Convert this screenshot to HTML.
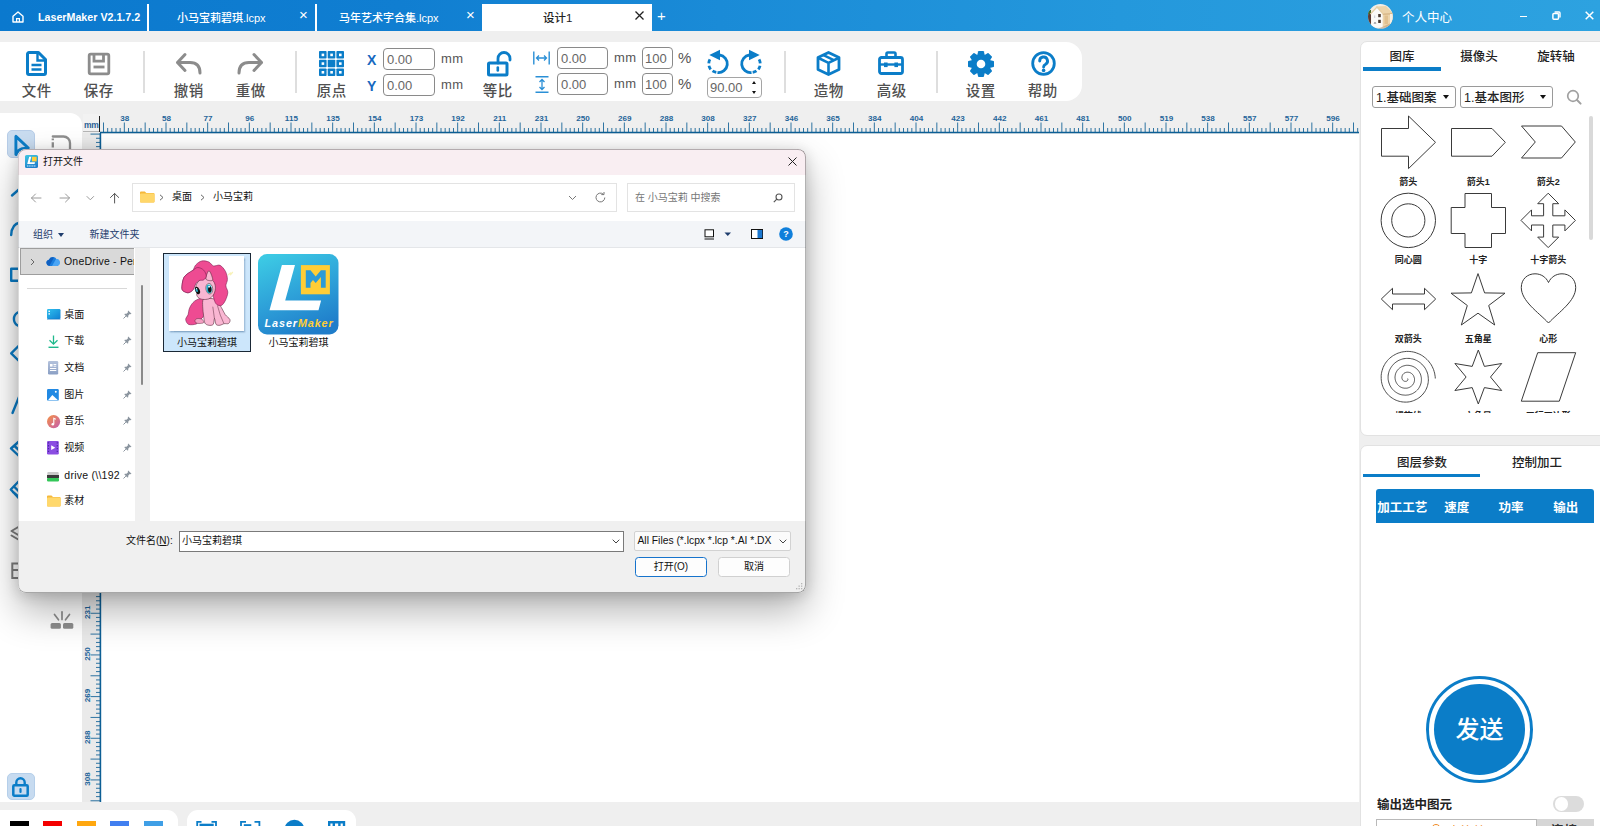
<!DOCTYPE html>
<html lang="zh-CN">
<head>
<meta charset="utf-8">
<title>LaserMaker</title>
<style>
*{box-sizing:border-box;margin:0;padding:0}
html,body{width:1600px;height:826px;overflow:hidden}
body{position:relative;background:#efefef;font-family:"Liberation Sans","Noto Sans CJK SC",sans-serif;color:#333;font-size:12px}
.abs{position:absolute}
svg{display:block;overflow:visible}
/* ---------- title bar ---------- */
#titlebar{position:absolute;left:0;top:0;width:1600px;height:31px;background:linear-gradient(90deg,#0b79ce 0%,#107ed1 25%,#1a8bd7 45%,#2498dc 70%,#2da2e0 100%)}
#titlebar .t{position:absolute;color:#fff;font-size:11px;line-height:14px;white-space:nowrap;font-weight:500}
#titlebar .sep{position:absolute;top:4px;width:2px;height:27px;background:#fff}
#titlebar .x{position:absolute;color:#fff;font-size:15px;line-height:14px}
#acttab{position:absolute;left:482px;top:4px;width:170px;height:27px;background:#fff}
/* ---------- toolbar ---------- */
#toolbar{position:absolute;left:0;top:42px;width:1082px;height:59.400px;background:#fff;border-radius:0 16px 16px 0}
.tb{position:absolute;margin-top:.8px;top:42px;width:60px;padding-left:1.500px;text-align:center;font-size:14.5px;color:#505050;font-weight:500;line-height:16px;letter-spacing:.5px}
.tbsep{position:absolute;top:51px;width:2px;height:42px;background:#dedede}
.inp{position:absolute;height:23px;border:1px solid #8a8a8a;border-radius:4px;background:#fff;font-size:13px;color:#666;line-height:21px;padding-left:3px}
.unit{position:absolute;font-size:13px;color:#555;line-height:14px;letter-spacing:.5px}
/* ---------- panels ---------- */
.panel{position:absolute;background:#fff}

.rt{position:absolute;text-align:center;font-size:12.5px;line-height:16px;color:#222;font-weight:500;white-space:nowrap}
.sel{position:absolute;height:22px;border:1px solid #9a9a9a;border-radius:3px;background:#fff;font-size:12.5px;line-height:22px;color:#222;padding-left:3px;font-weight:500;white-space:nowrap}
.car{position:absolute;width:0;height:0;border-left:3.5px solid transparent;border-right:3.5px solid transparent;border-top:4px solid #111}
.sl{position:absolute;width:70px;text-align:center;font-size:9px;line-height:12px;color:#222;font-weight:700;white-space:nowrap}
.th{position:absolute;width:60px;text-align:center;color:#fff;font-size:12.5px;line-height:16px;font-weight:700;white-space:nowrap}

/*DLGCSS*/
#dlg{position:absolute;left:18px;top:149px;width:788px;height:444px;background:#fff;border-radius:8px;overflow:hidden;box-shadow:0 18px 38px rgba(0,0,0,.30),0 2px 14px rgba(0,0,0,.16);font-family:"Liberation Sans","Noto Sans CJK SC",sans-serif}
#dlgtitle{position:absolute;left:0;top:-1px;width:788px;height:26.300px;background:#f9eef2;border-radius:7px 7px 0 0}
.fl{font-size:10px;line-height:14px;color:#111;text-align:center;white-space:nowrap}
/*ENDDLGCSS*/
</style>
</head>
<body>

<!-- ================= TITLE BAR ================= -->
<div id="titlebar">
  <svg class="abs" style="left:12px;top:11px" width="12" height="12" viewBox="0 0 12 12"><path d="M1 5.2 L6 1 L11 5.2 V11 H1 Z" fill="none" stroke="#fff" stroke-width="1.4" stroke-linejoin="round"/><path d="M4.6 11 V7.6 H7.4 V11" fill="none" stroke="#fff" stroke-width="1.2"/></svg>
  <div class="t" style="left:38px;top:10px;font-weight:700;font-size:10.7px">LaserMaker V2.1.7.2</div>
  <div class="sep" style="left:147px"></div>
  <div class="t" style="left:177px;top:11px">小马宝莉碧琪.lcpx</div>
  <div class="x" style="left:299px;top:8px">×</div>
  <div class="sep" style="left:315px"></div>
  <div class="t" style="left:339px;top:11px">马年艺术字合集.lcpx</div>
  <div class="x" style="left:466px;top:8px">×</div>
  <div id="acttab"></div>
  <div class="t" style="left:543px;top:11px;color:#222;font-weight:500;font-size:11.5px">设计1</div>
  <svg class="abs" style="left:635px;top:11px" width="9" height="9" viewBox="0 0 9 9"><path d="M.5 .5 L8.5 8.5 M8.5 .5 L.5 8.5" stroke="#222" stroke-width="1.3"/></svg>
  <div class="x" style="left:657px;top:9px;font-size:15px">+</div>
  <!-- right side -->
  <svg class="abs" style="left:1367.600px;top:3.900px" width="24.800" height="24.800" viewBox="0 0 24.800 24.800"><defs><clipPath id="avc"><circle cx="12.400" cy="12.400" r="12.400"/></clipPath></defs><g clip-path="url(#avc)"><rect width="24.800" height="24.800" fill="#f3ede4"/><path d="M0 7 H3 V22 H0 Z" fill="#5b3b33"/><path d="M0 6 H3 V10 H0 Z" fill="#3f6b2a"/><path d="M8 2.500 L18 2 L24.800 9 V20 L20 22.500 L14.500 23 V9.500 Z" fill="#ecd4ab"/><path d="M14.500 9.500 L24.800 9 V10.500 L14.500 11 Z" fill="#d9b98a"/><path d="M16.500 11.500 H20 V20 H16.500 Z" fill="#e0c08f"/><path d="M22 10 H24.800 V20 H22 Z" fill="#f6efe4"/><path d="M3.300 23.500 V9.500 L9 3.600 L14.500 9.500 V23.500 Z" fill="#fbfaf8"/><path d="M2.300 10.200 L9 3 L15.200 10" fill="none" stroke="#e6cfa6" stroke-width="1.200"/><rect x="10.200" y="10" width="2.600" height="3.200" fill="#4a3a30"/><rect x="10.200" y="15.800" width="2.600" height="3.200" fill="#4a3a30"/><path d="M5.500 19.500 L7 18 L8.500 19.500 Z" fill="#6a6a70"/><path d="M6.700 11.500 V14" stroke="#b8c0cc" stroke-width=".800"/><path d="M14 23 L22 19.500 V24.800 H10 Z" fill="#b9946a" opacity=".55"/></g></svg>
  <div class="t" style="left:1402px;top:10.500px;font-size:12.500px;font-weight:400">个人中心</div>
  <div class="abs" style="left:1519.500px;top:15.500px;width:7px;height:1.500px;background:#fff"></div>
  <svg class="abs" style="left:1552px;top:11px" width="9" height="9" viewBox="0 0 9 9"><rect x=".9" y="2.6" width="5.6" height="5.6" rx="1" fill="none" stroke="#fff" stroke-width="1.5"/><path d="M2.6 1 H7 A1 1 0 0 1 8 2 V6.4" fill="none" stroke="#fff" stroke-width="1.4"/></svg>
  <svg class="abs" style="left:1585px;top:11px" width="9" height="9" viewBox="0 0 9 9"><path d="M.7 .7 L8.3 8.3 M8.3 .7 L.7 8.3" stroke="#fff" stroke-width="1.5"/></svg>
</div>

<!-- ================= TOOLBAR ================= -->
<div id="toolbar"></div>
<!--TB-START-->
<!-- 文件 -->
<svg class="abs" style="left:26px;top:51px" width="21" height="25" viewBox="0 0 21 25"><path d="M3 1.5 H12.5 L19.5 8.5 V22 A1.5 1.5 0 0 1 18 23.5 H3 A1.5 1.5 0 0 1 1.5 22 V3 A1.5 1.5 0 0 1 3 1.5 Z" fill="none" stroke="#0b7dc8" stroke-width="3" stroke-linejoin="round"/><path d="M11.5 2 V9.5 H19" fill="none" stroke="#0b7dc8" stroke-width="2.4"/><path d="M5.5 14 H15.5 M5.5 18.5 H15.5" stroke="#0b7dc8" stroke-width="2.4"/></svg>
<div class="tb" style="left:6px;top:82px">文件</div>
<!-- 保存 -->
<svg class="abs" style="left:88px;top:52.700px" width="22" height="22" viewBox="0 0 22 22"><rect x="1.2" y="1.2" width="19.6" height="19.6" rx="1.5" fill="none" stroke="#8c8c8c" stroke-width="2.8"/><path d="M6 1.5 V8.2 H15.5 V1.5" fill="none" stroke="#8c8c8c" stroke-width="2.8"/><path d="M5.5 14 H16.5" stroke="#8c8c8c" stroke-width="2.8"/></svg>
<div class="tb" style="left:68px;top:82px">保存</div>
<div class="tbsep" style="left:143px"></div>
<!-- 撤销 -->
<svg class="abs" style="left:175px;top:53px" width="27" height="21" viewBox="0 0 27 21"><path d="M10 1.5 L2.5 9.5 L10 17.5" fill="none" stroke="#8c8c8c" stroke-width="3" stroke-linecap="round" stroke-linejoin="round"/><path d="M3 9.5 H15 Q25 9.5 25 20" fill="none" stroke="#8c8c8c" stroke-width="3" stroke-linecap="round"/></svg>
<div class="tb" style="left:158px;top:82px">撤销</div>
<!-- 重做 -->
<svg class="abs" style="left:237px;top:53px" width="27" height="21" viewBox="0 0 27 21"><path d="M17 1.5 L24.500 9.5 L17 17.5" fill="none" stroke="#8c8c8c" stroke-width="3" stroke-linecap="round" stroke-linejoin="round"/><path d="M24 9.500 H12 Q2 9.5 2 20" fill="none" stroke="#8c8c8c" stroke-width="3" stroke-linecap="round"/></svg>
<div class="tb" style="left:220px;top:82px">重做</div>
<div class="tbsep" style="left:295px"></div>
<!-- 原点 -->
<svg class="abs" style="left:319px;top:51px" width="25" height="25" viewBox="0 0 25 25">
<g fill="#0b7dc8"><rect x="0" y="0" width="7.6" height="7.6" rx=".8"/><rect x="8.7" y="0" width="7.6" height="7.6" rx=".8"/><rect x="17.4" y="0" width="7.6" height="7.6" rx=".8"/><rect x="0" y="8.7" width="7.6" height="7.6" rx=".8"/><rect x="8.7" y="8.700" width="7.6" height="7.6" rx=".8"/><rect x="17.4" y="8.7" width="7.6" height="7.6" rx=".8"/><rect x="0" y="17.4" width="7.6" height="7.6" rx=".8"/><rect x="8.7" y="17.4" width="7.6" height="7.6" rx=".8"/><rect x="17.4" y="17.4" width="7.6" height="7.6" rx=".8"/></g>
<g fill="#fff"><rect x="2.6" y="2.6" width="2.6" height="2.6"/><rect x="11.3" y="2.6" width="2.6" height="2.6"/><rect x="20" y="2.6" width="2.6" height="2.6"/><rect x="2.6" y="11.3" width="2.6" height="2.6"/><rect x="20" y="11.3" width="2.6" height="2.6"/><rect x="2.6" y="20" width="2.6" height="2.6"/><rect x="11.3" y="20" width="2.6" height="2.6"/><rect x="20" y="20" width="2.6" height="2.6"/></g></svg>
<div class="tb" style="left:301px;top:82px">原点</div>
<!-- X / Y -->
<div class="abs" style="left:367px;top:52px;font-weight:700;font-size:14px;line-height:16px;color:#1668c0">X</div>
<div class="abs" style="left:367px;top:78px;font-weight:700;font-size:14px;line-height:16px;color:#1668c0">Y</div>
<div class="inp" style="left:383px;top:48px;width:52px;height:22px">0.00</div>
<div class="inp" style="left:383px;top:74px;width:52px;height:22px">0.00</div>
<div class="unit" style="left:441px;top:52px">mm</div>
<div class="unit" style="left:441px;top:78px">mm</div>
<!-- 等比 -->
<svg class="abs" style="left:487px;top:51px" width="25" height="26" viewBox="0 0 25 26"><rect x="1.5" y="12" width="18.5" height="12" rx="1" fill="none" stroke="#0b7dc8" stroke-width="3"/><path d="M11 12 V7.5 A6 6 0 0 1 23 7.500 V9" fill="none" stroke="#0b7dc8" stroke-width="2.8" stroke-linecap="round"/><path d="M10.8 16.5 V19.5" stroke="#0b7dc8" stroke-width="2.6" stroke-linecap="round"/></svg>
<div class="tb" style="left:467px;top:82px">等比</div>
<!-- W / H -->
<svg class="abs" style="left:533px;top:51px" width="17" height="14" viewBox="0 0 17 14"><path d="M.8 .5 V13.500 M16.2 .5 V13.500" stroke="#2a8fd6" stroke-width="1.4"/><path d="M3.500 7 H13.500 M6 4.500 L3.500 7 L6 9.500 M11 4.500 L13.500 7 L11 9.500" fill="none" stroke="#2a8fd6" stroke-width="1.3"/></svg>
<svg class="abs" style="left:535px;top:76px" width="14" height="17" viewBox="0 0 14 17"><path d="M.5 .8 H13.500 M.5 16.2 H13.500" stroke="#2a8fd6" stroke-width="1.4"/><path d="M7 3.500 V13.500 M4.500 6 L7 3.500 L9.500 6 M4.500 11 L7 13.500 L9.500 11" fill="none" stroke="#2a8fd6" stroke-width="1.3"/></svg>
<div class="inp" style="left:557px;top:47px;width:51px;height:22px">0.00</div>
<div class="inp" style="left:557px;top:73px;width:51px;height:22px">0.00</div>
<div class="unit" style="left:614px;top:51px">mm</div>
<div class="unit" style="left:614px;top:77px">mm</div>
<div class="inp" style="left:642px;top:47px;width:31px;height:22px;padding-left:2px">100</div>
<div class="inp" style="left:642px;top:73px;width:31px;height:22px;padding-left:2px">100</div>
<div class="unit" style="left:678px;top:50px;font-size:15px;line-height:16px">%</div>
<div class="unit" style="left:678px;top:76px;font-size:15px;line-height:16px">%</div>
<!-- rotate -->
<svg class="abs" style="left:707px;top:49px" width="23" height="25" viewBox="0 0 23 25"><path d="M12.500 6 A8.750 8.750 0 0 1 10.500 23.500" fill="none" stroke="#0b7dc8" stroke-width="2.800"/><path d="M10.500 23.500 A8.750 8.750 0 0 1 3.300 9.800" fill="none" stroke="#0b7dc8" stroke-width="2.800" stroke-dasharray="4 2.400" stroke-dashoffset="-1.200"/><path d="M2.300 6 L13 .8 V11.200 Z" fill="#0b7dc8"/></svg>
<svg class="abs" style="left:739px;top:49px" width="23" height="25" viewBox="0 0 23 25"><g transform="translate(23,0) scale(-1,1)"><path d="M12.500 6 A8.750 8.750 0 0 1 10.500 23.500" fill="none" stroke="#0b7dc8" stroke-width="2.800"/><path d="M10.500 23.500 A8.750 8.750 0 0 1 3.300 9.800" fill="none" stroke="#0b7dc8" stroke-width="2.800" stroke-dasharray="4 2.400" stroke-dashoffset="-1.200"/><path d="M2.300 6 L13 .8 V11.200 Z" fill="#0b7dc8"/></g></svg>
<div class="inp" style="left:707px;top:76.500px;width:55px;height:21px;line-height:19px;padding-left:2px;border-color:#a5a5a5">90.00</div>
<div class="abs" style="left:751.500px;top:80.500px;width:0;height:0;border-left:2.600px solid transparent;border-right:2.600px solid transparent;border-bottom:3.200px solid #111"></div>
<div class="abs" style="left:751.500px;top:90.500px;width:0;height:0;border-left:2.600px solid transparent;border-right:2.600px solid transparent;border-top:3.200px solid #111"></div>
<div class="tbsep" style="left:784px"></div>
<!-- 造物 -->
<svg class="abs" style="left:816px;top:51px" width="25" height="25" viewBox="0 0 25 25"><path d="M12.500 1.500 L23 6.500 V18.500 L12.500 23.500 L2 18.500 V6.500 Z" fill="none" stroke="#0b7dc8" stroke-width="2.8" stroke-linejoin="round"/><path d="M2.500 7 L12.500 11.800 L22.500 7 M12.500 11.800 V23" fill="none" stroke="#0b7dc8" stroke-width="2.6"/><path d="M7.500 4.200 L17.800 9.200" stroke="#0b7dc8" stroke-width="2.4"/></svg>
<div class="tb" style="left:798px;top:82px">造物</div>
<!-- 高级 -->
<svg class="abs" style="left:878px;top:51px" width="26" height="24" viewBox="0 0 26 24"><rect x="1.5" y="6.500" width="23" height="16" rx="2" fill="none" stroke="#0b7dc8" stroke-width="2.8"/><path d="M8.500 6 V2.800 A1.300 1.300 0 0 1 9.800 1.500 H16.200 A1.300 1.300 0 0 1 17.500 2.800 V6" fill="none" stroke="#0b7dc8" stroke-width="2.600"/><path d="M2 13.500 H24" stroke="#0b7dc8" stroke-width="2.4"/><rect x="6" y="11.500" width="3.600" height="4.600" fill="#0b7dc8"/><rect x="16.400" y="11.500" width="3.600" height="4.600" fill="#0b7dc8"/></svg>
<div class="tb" style="left:861px;top:82px">高级</div>
<div class="tbsep" style="left:936px"></div>
<!-- 设置 -->
<svg class="abs" style="left:968px;top:50.500px" width="26" height="26" viewBox="-13 -13 26 26"><g fill="#0b7dc8"><circle r="9.800"/><g transform="rotate(0)"><path d="M-3.900 -8.500 L-2.900 -12.600 Q-2.800 -13 -2.300 -13 H2.300 Q2.800 -13 2.900 -12.600 L3.900 -8.500 Z"/></g><g transform="rotate(45)"><path d="M-3.900 -8.500 L-2.900 -12.600 Q-2.800 -13 -2.300 -13 H2.300 Q2.800 -13 2.900 -12.600 L3.900 -8.500 Z"/></g><g transform="rotate(90)"><path d="M-3.900 -8.500 L-2.900 -12.600 Q-2.800 -13 -2.300 -13 H2.300 Q2.800 -13 2.900 -12.600 L3.900 -8.500 Z"/></g><g transform="rotate(135)"><path d="M-3.900 -8.500 L-2.900 -12.600 Q-2.800 -13 -2.300 -13 H2.300 Q2.800 -13 2.900 -12.600 L3.900 -8.500 Z"/></g><g transform="rotate(180)"><path d="M-3.900 -8.500 L-2.900 -12.600 Q-2.800 -13 -2.300 -13 H2.300 Q2.800 -13 2.900 -12.600 L3.900 -8.500 Z"/></g><g transform="rotate(225)"><path d="M-3.900 -8.500 L-2.900 -12.600 Q-2.800 -13 -2.300 -13 H2.300 Q2.800 -13 2.900 -12.600 L3.900 -8.500 Z"/></g><g transform="rotate(270)"><path d="M-3.900 -8.500 L-2.900 -12.600 Q-2.800 -13 -2.300 -13 H2.300 Q2.800 -13 2.900 -12.600 L3.900 -8.500 Z"/></g><g transform="rotate(315)"><path d="M-3.900 -8.500 L-2.900 -12.600 Q-2.800 -13 -2.300 -13 H2.300 Q2.800 -13 2.900 -12.600 L3.900 -8.500 Z"/></g></g><circle r="4.300" fill="#fff"/></svg>
<div class="tb" style="left:950px;top:82px">设置</div>
<!-- 帮助 -->
<svg class="abs" style="left:1031px;top:51.300px" width="25" height="25" viewBox="0 0 25 25"><circle cx="12.500" cy="12.500" r="10.800" fill="none" stroke="#0b7dc8" stroke-width="2.800"/><path d="M8.700 10 A3.900 3.900 0 1 1 14.600 13.200 Q12.600 14.300 12.600 16" fill="none" stroke="#0b7dc8" stroke-width="2.900" stroke-linecap="round"/><circle cx="12.600" cy="19.400" r="1.800" fill="#0b7dc8"/></svg>
<div class="tb" style="left:1012px;top:82px">帮助</div>
<!--TB-END-->

<!-- ================= LEFT TOOL PANEL ================= -->
<div class="panel" style="left:0;top:113px;width:81.500px;height:689px;border-radius:0 12px 0 0"></div>
<!--LT-START-->
<div class="abs" style="left:7px;top:130px;width:28px;height:27.500px;border-radius:5px;background:#c9dcf0;border:1px solid #b7cde8"></div>
<svg class="abs" style="left:0;top:113px" width="82" height="689" viewBox="0 113 82 689" fill="none" stroke="#0b7dc8" stroke-width="2.400" stroke-linecap="round" stroke-linejoin="round">
<path d="M15.900 136.400 V154.600 Q18 149.800 22.200 148.700 L28.300 148 Z" stroke-width="2.900"/>
<path d="M52.800 136.500 H63.500 A6.500 6.500 0 0 1 70 143 V156" stroke="#8e8e8e" stroke-width="2.300"/>
<path d="M52.800 138.500 V140.200 M52.800 142.300 V147.500 M52.800 149.500 V156" stroke="#8e8e8e" stroke-width="2.300" stroke-linecap="butt"/>
<path d="M12 195.500 L20 188.500"/>
<path d="M11.200 235 C11.500 228 14 223.500 20 222.500"/>
<path d="M20 268.700 H11.200 V280.700 H20"/>
<path d="M20 312.500 A7.500 7.500 0 0 0 20 325.500" transform="translate(-2.300 0)"/>
<path d="M20 344.500 L11.200 353.300 L20 362"/>
<path d="M12.500 413 L19 397"/>
<path d="M20 440.500 L11 448.500 L20 457 M14.500 446 L20 451"/>
<path d="M20 480 L10.800 489.500 L20 499.500 M14.500 487 L20 492.500 M13 492 L20 498"/>
<path d="M20 526 L11.500 531 L20 536 M11.500 535.500 L20 540.500" stroke="#7d7d7d" stroke-width="2"/>
<path d="M20 563.500 H12.300 V578 H20 M12.300 570 H20" stroke="#7d7d7d" stroke-width="2" stroke-linejoin="miter"/>
<g stroke="none" fill="#8e8e8e"><rect x="50.600" y="623" width="10.300" height="5.800" rx="1.500"/><rect x="63" y="623" width="10.300" height="5.800" rx="1.500"/></g>
<path d="M62 611.800 V619.500 M54.500 614.500 L58.500 619.800 M69.500 614.500 L65.500 619.800" stroke="#8e8e8e" stroke-width="1.700"/>
</svg>
<div class="abs" style="left:7px;top:772.500px;width:27.500px;height:27px;border-radius:5px;background:#c7dbf0;border:1px solid #b5cfea"></div>
<svg class="abs" style="left:12px;top:777px" width="17" height="20" viewBox="0 0 17 20" fill="none" stroke="#0b7dc8"><rect x="1.300" y="8.300" width="14.400" height="10.400" rx="1" stroke-width="2.500"/><path d="M4.300 8 V5.500 A4.200 4.200 0 0 1 12.700 5.500 V8" stroke-width="2.400"/><path d="M8.500 12 V15" stroke-width="2.200" stroke-linecap="round"/></svg>
<!--LT-END-->

<!-- ================= CANVAS + RULERS ================= -->
<div class="panel" style="left:82px;top:113px;width:1277px;height:689px"></div>
<!--RU-START-->
<div class="abs" style="left:82px;top:113px;width:1277px;height:21px;background:#efefef"></div>
<div class="abs" style="left:82px;top:133px;width:19px;height:669px;background:#eaeaea"></div>
<svg class="abs" style="left:82px;top:113px" width="1277" height="21" viewBox="0 0 1277 21" font-family="Liberation Sans, sans-serif">
<path d="M21.50 9.5V19M25.67 15V19M29.83 15V19M34.00 15V19M38.17 15V19M42.33 9.5V19M46.50 15V19M50.67 15V19M54.83 15V19M59.00 15V19M63.17 9.5V19M67.33 15V19M71.50 15V19M75.67 15V19M79.83 15V19M84.00 9.5V19M88.17 15V19M92.33 15V19M96.50 15V19M100.67 15V19M104.83 9.5V19M109.00 15V19M113.17 15V19M117.33 15V19M121.50 15V19M125.67 9.5V19M129.83 15V19M134.00 15V19M138.17 15V19M142.33 15V19M146.50 9.5V19M150.67 15V19M154.83 15V19M159.00 15V19M163.17 15V19M167.33 9.5V19M171.50 15V19M175.67 15V19M179.83 15V19M184.00 15V19M188.17 9.5V19M192.33 15V19M196.50 15V19M200.67 15V19M204.83 15V19M209.00 9.5V19M213.17 15V19M217.33 15V19M221.50 15V19M225.67 15V19M229.83 9.5V19M234.00 15V19M238.17 15V19M242.33 15V19M246.50 15V19M250.67 9.5V19M254.83 15V19M259.00 15V19M263.17 15V19M267.33 15V19M271.50 9.5V19M275.67 15V19M279.83 15V19M284.00 15V19M288.17 15V19M292.33 9.5V19M296.50 15V19M300.67 15V19M304.83 15V19M309.00 15V19M313.17 9.5V19M317.33 15V19M321.50 15V19M325.67 15V19M329.83 15V19M334.00 9.5V19M338.17 15V19M342.33 15V19M346.50 15V19M350.67 15V19M354.83 9.5V19M359.00 15V19M363.17 15V19M367.33 15V19M371.50 15V19M375.67 9.5V19M379.83 15V19M384.00 15V19M388.17 15V19M392.33 15V19M396.50 9.5V19M400.67 15V19M404.83 15V19M409.00 15V19M413.17 15V19M417.33 9.5V19M421.50 15V19M425.67 15V19M429.83 15V19M434.00 15V19M438.17 9.5V19M442.33 15V19M446.50 15V19M450.67 15V19M454.83 15V19M459.00 9.5V19M463.17 15V19M467.33 15V19M471.50 15V19M475.67 15V19M479.83 9.5V19M484.00 15V19M488.17 15V19M492.33 15V19M496.50 15V19M500.67 9.5V19M504.83 15V19M509.00 15V19M513.17 15V19M517.33 15V19M521.50 9.5V19M525.67 15V19M529.83 15V19M534.00 15V19M538.17 15V19M542.33 9.5V19M546.50 15V19M550.67 15V19M554.83 15V19M559.00 15V19M563.17 9.5V19M567.33 15V19M571.50 15V19M575.67 15V19M579.83 15V19M584.00 9.5V19M588.17 15V19M592.33 15V19M596.50 15V19M600.67 15V19M604.83 9.5V19M609.00 15V19M613.17 15V19M617.33 15V19M621.50 15V19M625.67 9.5V19M629.83 15V19M634.00 15V19M638.17 15V19M642.33 15V19M646.50 9.5V19M650.67 15V19M654.83 15V19M659.00 15V19M663.17 15V19M667.33 9.5V19M671.50 15V19M675.67 15V19M679.83 15V19M684.00 15V19M688.17 9.5V19M692.33 15V19M696.50 15V19M700.67 15V19M704.83 15V19M709.00 9.5V19M713.17 15V19M717.33 15V19M721.50 15V19M725.67 15V19M729.83 9.5V19M734.00 15V19M738.17 15V19M742.33 15V19M746.50 15V19M750.67 9.5V19M754.83 15V19M759.00 15V19M763.17 15V19M767.33 15V19M771.50 9.5V19M775.67 15V19M779.83 15V19M784.00 15V19M788.17 15V19M792.33 9.5V19M796.50 15V19M800.67 15V19M804.83 15V19M809.00 15V19M813.17 9.5V19M817.33 15V19M821.50 15V19M825.67 15V19M829.83 15V19M834.00 9.5V19M838.17 15V19M842.33 15V19M846.50 15V19M850.67 15V19M854.83 9.5V19M859.00 15V19M863.17 15V19M867.33 15V19M871.50 15V19M875.67 9.5V19M879.83 15V19M884.00 15V19M888.17 15V19M892.33 15V19M896.50 9.5V19M900.67 15V19M904.83 15V19M909.00 15V19M913.17 15V19M917.33 9.5V19M921.50 15V19M925.67 15V19M929.83 15V19M934.00 15V19M938.17 9.5V19M942.33 15V19M946.50 15V19M950.67 15V19M954.83 15V19M959.00 9.5V19M963.17 15V19M967.33 15V19M971.50 15V19M975.67 15V19M979.83 9.5V19M984.00 15V19M988.17 15V19M992.33 15V19M996.50 15V19M1000.67 9.5V19M1004.83 15V19M1009.00 15V19M1013.17 15V19M1017.33 15V19M1021.50 9.5V19M1025.67 15V19M1029.83 15V19M1034.00 15V19M1038.17 15V19M1042.33 9.5V19M1046.50 15V19M1050.67 15V19M1054.83 15V19M1059.00 15V19M1063.16 9.5V19M1067.33 15V19M1071.50 15V19M1075.66 15V19M1079.83 15V19M1084.00 9.5V19M1088.16 15V19M1092.33 15V19M1096.50 15V19M1100.66 15V19M1104.83 9.5V19M1109.00 15V19M1113.16 15V19M1117.33 15V19M1121.50 15V19M1125.66 9.5V19M1129.83 15V19M1134.00 15V19M1138.16 15V19M1142.33 15V19M1146.50 9.5V19M1150.66 15V19M1154.83 15V19M1159.00 15V19M1163.16 15V19M1167.33 9.5V19M1171.50 15V19M1175.66 15V19M1179.83 15V19M1184.00 15V19M1188.16 9.5V19M1192.33 15V19M1196.50 15V19M1200.66 15V19M1204.83 15V19M1209.00 9.5V19M1213.16 15V19M1217.33 15V19M1221.50 15V19M1225.66 15V19M1229.83 9.5V19M1234.00 15V19M1238.16 15V19M1242.33 15V19M1246.50 15V19M1250.66 9.5V19M1254.83 15V19M1259.00 15V19M1263.16 15V19M1267.33 15V19M1271.50 9.5V19M1275.66 15V19" stroke="#0d5f95" stroke-width="1" fill="none" opacity=".85"/>
<path d="M18 19.5H1277" stroke="#0d5f95" stroke-width="1.6"/>
<text x="42.7" y="8.300" font-size="8.1" font-weight="700" fill="#1f659a" text-anchor="middle">38</text>
<text x="84.4" y="8.300" font-size="8.1" font-weight="700" fill="#1f659a" text-anchor="middle">58</text>
<text x="126.1" y="8.300" font-size="8.1" font-weight="700" fill="#1f659a" text-anchor="middle">77</text>
<text x="167.7" y="8.300" font-size="8.1" font-weight="700" fill="#1f659a" text-anchor="middle">96</text>
<text x="209.4" y="8.300" font-size="8.1" font-weight="700" fill="#1f659a" text-anchor="middle">115</text>
<text x="251.1" y="8.300" font-size="8.1" font-weight="700" fill="#1f659a" text-anchor="middle">135</text>
<text x="292.7" y="8.300" font-size="8.1" font-weight="700" fill="#1f659a" text-anchor="middle">154</text>
<text x="334.4" y="8.300" font-size="8.1" font-weight="700" fill="#1f659a" text-anchor="middle">173</text>
<text x="376.1" y="8.300" font-size="8.1" font-weight="700" fill="#1f659a" text-anchor="middle">192</text>
<text x="417.7" y="8.300" font-size="8.1" font-weight="700" fill="#1f659a" text-anchor="middle">211</text>
<text x="459.4" y="8.300" font-size="8.1" font-weight="700" fill="#1f659a" text-anchor="middle">231</text>
<text x="501.1" y="8.300" font-size="8.1" font-weight="700" fill="#1f659a" text-anchor="middle">250</text>
<text x="542.7" y="8.300" font-size="8.1" font-weight="700" fill="#1f659a" text-anchor="middle">269</text>
<text x="584.4" y="8.300" font-size="8.1" font-weight="700" fill="#1f659a" text-anchor="middle">288</text>
<text x="626.1" y="8.300" font-size="8.1" font-weight="700" fill="#1f659a" text-anchor="middle">308</text>
<text x="667.7" y="8.300" font-size="8.1" font-weight="700" fill="#1f659a" text-anchor="middle">327</text>
<text x="709.4" y="8.300" font-size="8.1" font-weight="700" fill="#1f659a" text-anchor="middle">346</text>
<text x="751.1" y="8.300" font-size="8.1" font-weight="700" fill="#1f659a" text-anchor="middle">365</text>
<text x="792.7" y="8.300" font-size="8.1" font-weight="700" fill="#1f659a" text-anchor="middle">384</text>
<text x="834.4" y="8.300" font-size="8.1" font-weight="700" fill="#1f659a" text-anchor="middle">404</text>
<text x="876.1" y="8.300" font-size="8.1" font-weight="700" fill="#1f659a" text-anchor="middle">423</text>
<text x="917.7" y="8.300" font-size="8.1" font-weight="700" fill="#1f659a" text-anchor="middle">442</text>
<text x="959.4" y="8.300" font-size="8.1" font-weight="700" fill="#1f659a" text-anchor="middle">461</text>
<text x="1001.1" y="8.300" font-size="8.1" font-weight="700" fill="#1f659a" text-anchor="middle">481</text>
<text x="1042.7" y="8.300" font-size="8.1" font-weight="700" fill="#1f659a" text-anchor="middle">500</text>
<text x="1084.4" y="8.300" font-size="8.1" font-weight="700" fill="#1f659a" text-anchor="middle">519</text>
<text x="1126.1" y="8.300" font-size="8.1" font-weight="700" fill="#1f659a" text-anchor="middle">538</text>
<text x="1167.7" y="8.300" font-size="8.1" font-weight="700" fill="#1f659a" text-anchor="middle">557</text>
<text x="1209.4" y="8.300" font-size="8.1" font-weight="700" fill="#1f659a" text-anchor="middle">577</text>
<text x="1251.1" y="8.300" font-size="8.1" font-weight="700" fill="#1f659a" text-anchor="middle">596</text>
</svg>
<div class="abs" style="left:83px;top:114px;width:17px;height:18px;background:#f2f2f2;border-bottom:1px solid #b5b5b5"></div>
<div class="abs" style="left:99px;top:116px;width:1px;height:16px;background:#222"></div>
<div class="abs" style="left:84px;top:120px;font-size:8.5px;line-height:10px;font-weight:700;color:#2a5f95;letter-spacing:-.2px">mm</div>
<svg class="abs" style="left:82px;top:133px" width="19" height="669" viewBox="0 0 19 669" font-family="Liberation Sans, sans-serif">
<path d="M8.5 1.10H18M14 5.27H18M14 9.43H18M14 13.60H18M14 17.77H18M8.5 21.93H18M14 26.10H18M14 30.27H18M14 34.43H18M14 38.60H18M8.5 42.77H18M14 46.93H18M14 51.10H18M14 55.27H18M14 59.43H18M8.5 63.60H18M14 67.77H18M14 71.93H18M14 76.10H18M14 80.27H18M8.5 84.43H18M14 88.60H18M14 92.77H18M14 96.93H18M14 101.10H18M8.5 105.27H18M14 109.43H18M14 113.60H18M14 117.77H18M14 121.93H18M8.5 126.10H18M14 130.27H18M14 134.43H18M14 138.60H18M14 142.77H18M8.5 146.93H18M14 151.10H18M14 155.27H18M14 159.43H18M14 163.60H18M8.5 167.77H18M14 171.93H18M14 176.10H18M14 180.27H18M14 184.43H18M8.5 188.60H18M14 192.77H18M14 196.93H18M14 201.10H18M14 205.27H18M8.5 209.43H18M14 213.60H18M14 217.77H18M14 221.93H18M14 226.10H18M8.5 230.27H18M14 234.43H18M14 238.60H18M14 242.77H18M14 246.93H18M8.5 251.10H18M14 255.27H18M14 259.43H18M14 263.60H18M14 267.77H18M8.5 271.93H18M14 276.10H18M14 280.27H18M14 284.43H18M14 288.60H18M8.5 292.77H18M14 296.93H18M14 301.10H18M14 305.27H18M14 309.43H18M8.5 313.60H18M14 317.77H18M14 321.93H18M14 326.10H18M14 330.27H18M8.5 334.43H18M14 338.60H18M14 342.77H18M14 346.93H18M14 351.10H18M8.5 355.27H18M14 359.43H18M14 363.60H18M14 367.77H18M14 371.93H18M8.5 376.10H18M14 380.27H18M14 384.43H18M14 388.60H18M14 392.77H18M8.5 396.93H18M14 401.10H18M14 405.27H18M14 409.43H18M14 413.60H18M8.5 417.77H18M14 421.93H18M14 426.10H18M14 430.27H18M14 434.43H18M8.5 438.60H18M14 442.77H18M14 446.93H18M14 451.10H18M14 455.27H18M8.5 459.43H18M14 463.60H18M14 467.77H18M14 471.93H18M14 476.10H18M8.5 480.27H18M14 484.43H18M14 488.60H18M14 492.77H18M14 496.93H18M8.5 501.10H18M14 505.27H18M14 509.43H18M14 513.60H18M14 517.77H18M8.5 521.93H18M14 526.10H18M14 530.27H18M14 534.43H18M14 538.60H18M8.5 542.77H18M14 546.93H18M14 551.10H18M14 555.27H18M14 559.43H18M8.5 563.60H18M14 567.77H18M14 571.93H18M14 576.10H18M14 580.27H18M8.5 584.43H18M14 588.60H18M14 592.77H18M14 596.93H18M14 601.10H18M8.5 605.27H18M14 609.43H18M14 613.60H18M14 617.77H18M14 621.93H18M8.5 626.10H18M14 630.27H18M14 634.43H18M14 638.60H18M14 642.77H18M8.5 646.93H18M14 651.10H18M14 655.27H18M14 659.43H18M14 663.60H18M8.5 667.77H18" stroke="#0d5f95" stroke-width="1" fill="none" opacity=".85"/>
<path d="M18.4 0V669" stroke="#0d5f95" stroke-width="1.6"/>
<text transform="translate(8.2 62.6) rotate(-90)" font-size="8.1" font-weight="700" fill="#1f659a" text-anchor="middle">38</text>
<text transform="translate(8.2 104.3) rotate(-90)" font-size="8.1" font-weight="700" fill="#1f659a" text-anchor="middle">58</text>
<text transform="translate(8.2 145.9) rotate(-90)" font-size="8.1" font-weight="700" fill="#1f659a" text-anchor="middle">77</text>
<text transform="translate(8.2 187.6) rotate(-90)" font-size="8.1" font-weight="700" fill="#1f659a" text-anchor="middle">96</text>
<text transform="translate(8.2 229.3) rotate(-90)" font-size="8.1" font-weight="700" fill="#1f659a" text-anchor="middle">115</text>
<text transform="translate(8.2 270.9) rotate(-90)" font-size="8.1" font-weight="700" fill="#1f659a" text-anchor="middle">135</text>
<text transform="translate(8.2 312.6) rotate(-90)" font-size="8.1" font-weight="700" fill="#1f659a" text-anchor="middle">154</text>
<text transform="translate(8.2 354.3) rotate(-90)" font-size="8.1" font-weight="700" fill="#1f659a" text-anchor="middle">173</text>
<text transform="translate(8.2 395.9) rotate(-90)" font-size="8.1" font-weight="700" fill="#1f659a" text-anchor="middle">192</text>
<text transform="translate(8.2 437.6) rotate(-90)" font-size="8.1" font-weight="700" fill="#1f659a" text-anchor="middle">211</text>
<text transform="translate(8.2 479.3) rotate(-90)" font-size="8.1" font-weight="700" fill="#1f659a" text-anchor="middle">231</text>
<text transform="translate(8.2 520.9) rotate(-90)" font-size="8.1" font-weight="700" fill="#1f659a" text-anchor="middle">250</text>
<text transform="translate(8.2 562.6) rotate(-90)" font-size="8.1" font-weight="700" fill="#1f659a" text-anchor="middle">269</text>
<text transform="translate(8.2 604.3) rotate(-90)" font-size="8.1" font-weight="700" fill="#1f659a" text-anchor="middle">288</text>
<text transform="translate(8.2 645.9) rotate(-90)" font-size="8.1" font-weight="700" fill="#1f659a" text-anchor="middle">308</text>
</svg>
<!--RU-END-->

<!-- ================= BOTTOM BARS ================= -->
<div class="panel" style="left:0;top:810px;width:177.500px;height:20px;border-radius:0 11px 0 0"></div>
<div class="panel" style="left:187px;top:810px;width:169px;height:20px;border-radius:11px 11px 0 0"></div>
<!--BO-START-->
<div class="abs" style="left:10px;top:821px;width:19px;height:8px;background:#000"></div>
<div class="abs" style="left:43px;top:821px;width:19px;height:8px;background:#f40000"></div>
<div class="abs" style="left:76.500px;top:821px;width:19px;height:8px;background:#ffa70f"></div>
<div class="abs" style="left:110px;top:821px;width:19px;height:8px;background:#417ff0"></div>
<div class="abs" style="left:143.500px;top:821px;width:19px;height:8px;background:#3f9fe6"></div>
<svg class="abs" style="left:187px;top:810px" width="169" height="16" viewBox="187 810 169 16" fill="none" stroke="#0b7dc8" stroke-width="1.800">
<path d="M197.200 827 V821.900 H201.500 M211.500 821.900 H216 V827"/>
<rect x="199.500" y="823.700" width="14.200" height="5" fill="#0b7dc8" stroke="none"/>
<path d="M241 827 V821.900 H246 M254.500 821.900 H259.400 V827"/>
<rect x="243.800" y="824.200" width="7.500" height="4" fill="#0b7dc8" stroke="none"/>
<circle cx="294.400" cy="829.800" r="10" fill="#0b7dc8" stroke="none"/>
<path d="M329.200 828 V822.200 H344 V828 M333.800 822 V828 M339.400 822 V828" stroke-width="2.400"/>
</svg>
<!--BO-END-->

<!-- ================= RIGHT PANELS ================= -->
<div class="panel" style="left:1360px;top:41px;width:241px;height:394.500px;border-radius:7px 0 0 7px;border:1px solid #e2e2e2"></div>
<div class="panel" style="left:1360px;top:445px;width:241px;height:390px;border-radius:7px 0 0 0;border:1px solid #e2e2e2"></div>
<!--RI-START-->
<div class="rt" style="left:1372px;top:48.500px;width:60px">图库</div>
<div class="rt" style="left:1449px;top:48.500px;width:60px">摄像头</div>
<div class="rt" style="left:1526px;top:48.500px;width:60px">旋转轴</div>
<div class="abs" style="left:1363px;top:67px;width:78px;height:3.5px;background:#0b7dc8"></div>
<div class="sel" style="left:1372px;top:86px;width:84px">1.基础图案</div><div class="car" style="left:1443px;top:95px"></div>
<div class="sel" style="left:1460px;top:86px;width:93px">1.基本图形</div><div class="car" style="left:1540px;top:95px"></div>
<svg class="abs" style="left:1566px;top:89px" width="16" height="16" viewBox="0 0 16 16"><circle cx="7" cy="7" r="5.300" fill="none" stroke="#a0a0a0" stroke-width="1.700"/><path d="M11 11 L14.600 14.600" stroke="#a0a0a0" stroke-width="2" stroke-linecap="round"/></svg>
<div class="abs" style="left:1589px;top:116px;width:4px;height:124px;background:#d9d9d9;border-radius:2px"></div>
<div class="abs" style="left:1372px;top:110px;width:215px;height:303px;overflow:hidden">
<svg class="abs" style="left:0;top:0" width="215" height="320" viewBox="1372 110 215 320" fill="none" stroke="#3a3a3a" stroke-width="1" stroke-linejoin="miter">
<path d="M1381.500 128.500 H1408.500 V116 L1435.500 142.300 L1408.500 168.600 V156.200 H1381.500 Z"/>
<path d="M1451.500 128.500 H1492 L1505.300 142.300 L1492 156.200 H1451.500 Z"/>
<path d="M1521.500 126 H1561.500 L1575.300 142 L1561.500 158 H1521.500 L1535.300 142 Z"/>
<circle cx="1408.300" cy="220.400" r="27.200"/><circle cx="1408.300" cy="220.400" r="16.600"/>
<path d="M1465 193.500 H1491.500 V207.500 H1505.500 V233.500 H1491.500 V247.500 H1465 V233.500 H1451.200 V207.500 H1465 Z"/>
<path d="M1552.8 215.8 L1564.9 215.8 L1564.9 209.9 L1575.4 220.4 L1564.9 230.9 L1564.9 225.0 L1552.8 225.0 L1552.8 225.0 L1552.8 237.1 L1558.7 237.1 L1548.2 247.6 L1537.7 237.1 L1543.6 237.1 L1543.6 225.0 L1543.6 225.0 L1531.5 225.0 L1531.5 230.9 L1521.0 220.4 L1531.5 209.9 L1531.5 215.8 L1543.6 215.8 L1543.6 215.8 L1543.6 203.7 L1537.7 203.7 L1548.2 193.2 L1558.7 203.7 L1552.8 203.7 L1552.8 215.8 Z"/>
<path d="M1381.300 299 L1392.500 288.300 V294 H1424.500 V288.300 L1435.700 299 L1424.500 309.700 V304 H1392.500 V309.700 Z"/>
<path d="M1478.0 273.6 L1484.6 292.9 L1505.0 293.2 L1488.7 305.5 L1494.7 325.0 L1478.0 313.2 L1461.3 325.0 L1467.3 305.5 L1451.0 293.2 L1471.4 292.9 Z"/>
<path d="M1548.500 323 C1538 312 1521.300 301 1521.300 287.500 C1521.300 279 1527.500 273.800 1535 273.800 C1541 273.800 1546 277 1548.500 282.500 C1551 277 1556 273.800 1562 273.800 C1569.500 273.800 1575.700 279 1575.700 287.500 C1575.700 301 1559 312 1548.500 323 Z"/>
<path stroke-width=".9" d="M1407.5 378.5 L1407.6 378.6 L1407.6 378.6 L1407.7 378.7 L1407.7 378.8 L1407.8 378.9 L1407.8 379.0 L1407.8 379.1 L1407.9 379.2 L1407.9 379.4 L1407.9 379.5 L1407.9 379.6 L1407.8 379.8 L1407.8 379.9 L1407.8 380.0 L1407.7 380.2 L1407.6 380.3 L1407.6 380.4 L1407.5 380.5 L1407.4 380.7 L1407.2 380.8 L1407.1 380.9 L1407.0 381.0 L1406.8 381.1 L1406.7 381.2 L1406.5 381.2 L1406.3 381.3 L1406.1 381.4 L1405.9 381.4 L1405.8 381.4 L1405.5 381.4 L1405.3 381.4 L1405.1 381.4 L1404.9 381.4 L1404.7 381.3 L1404.5 381.3 L1404.3 381.2 L1404.1 381.1 L1403.8 381.0 L1403.6 380.9 L1403.4 380.7 L1403.2 380.6 L1403.1 380.4 L1402.9 380.2 L1402.7 380.0 L1402.6 379.8 L1402.4 379.5 L1402.3 379.3 L1402.2 379.0 L1402.1 378.8 L1402.0 378.5 L1402.0 378.2 L1401.9 377.9 L1401.9 377.6 L1401.9 377.3 L1401.9 377.0 L1402.0 376.7 L1402.0 376.4 L1402.1 376.1 L1402.2 375.8 L1402.3 375.5 L1402.5 375.2 L1402.6 374.9 L1402.8 374.6 L1403.0 374.3 L1403.3 374.0 L1403.5 373.8 L1403.8 373.5 L1404.1 373.3 L1404.4 373.1 L1404.7 372.9 L1405.0 372.8 L1405.4 372.6 L1405.7 372.5 L1406.1 372.4 L1406.5 372.3 L1406.9 372.2 L1407.3 372.2 L1407.7 372.2 L1408.1 372.2 L1408.5 372.3 L1408.9 372.3 L1409.4 372.4 L1409.8 372.6 L1410.2 372.7 L1410.6 372.9 L1410.9 373.1 L1411.3 373.4 L1411.7 373.6 L1412.0 373.9 L1412.4 374.2 L1412.7 374.6 L1413.0 374.9 L1413.3 375.3 L1413.5 375.7 L1413.7 376.2 L1413.9 376.6 L1414.1 377.0 L1414.2 377.5 L1414.4 378.0 L1414.5 378.5 L1414.5 379.0 L1414.5 379.5 L1414.5 380.0 L1414.5 380.5 L1414.4 381.1 L1414.3 381.6 L1414.1 382.1 L1414.0 382.6 L1413.7 383.1 L1413.5 383.6 L1413.2 384.1 L1412.9 384.5 L1412.6 385.0 L1412.2 385.4 L1411.8 385.8 L1411.4 386.2 L1410.9 386.5 L1410.4 386.8 L1409.9 387.1 L1409.4 387.4 L1408.8 387.6 L1408.3 387.8 L1407.7 388.0 L1407.1 388.1 L1406.5 388.2 L1405.9 388.2 L1405.3 388.2 L1404.6 388.2 L1404.0 388.2 L1403.4 388.0 L1402.8 387.9 L1402.2 387.7 L1401.6 387.5 L1401.0 387.2 L1400.4 386.9 L1399.8 386.6 L1399.3 386.2 L1398.8 385.8 L1398.3 385.3 L1397.8 384.8 L1397.4 384.3 L1397.0 383.7 L1396.6 383.2 L1396.3 382.6 L1396.0 381.9 L1395.7 381.3 L1395.5 380.6 L1395.3 379.9 L1395.2 379.2 L1395.1 378.5 L1395.0 377.8 L1395.0 377.1 L1395.1 376.3 L1395.2 375.6 L1395.3 374.9 L1395.5 374.1 L1395.7 373.4 L1396.0 372.7 L1396.3 372.0 L1396.7 371.4 L1397.1 370.7 L1397.6 370.1 L1398.1 369.5 L1398.6 368.9 L1399.2 368.4 L1399.8 367.9 L1400.4 367.5 L1401.1 367.0 L1401.8 366.6 L1402.5 366.3 L1403.3 366.0 L1404.1 365.8 L1404.9 365.6 L1405.7 365.4 L1406.5 365.3 L1407.3 365.3 L1408.2 365.3 L1409.0 365.4 L1409.8 365.5 L1410.7 365.7 L1411.5 365.9 L1412.3 366.2 L1413.1 366.5 L1413.9 366.9 L1414.6 367.3 L1415.4 367.8 L1416.1 368.3 L1416.8 368.9 L1417.4 369.5 L1418.0 370.2 L1418.6 370.9 L1419.1 371.6 L1419.5 372.4 L1420.0 373.2 L1420.3 374.0 L1420.7 374.9 L1420.9 375.7 L1421.1 376.6 L1421.3 377.6 L1421.4 378.5 L1421.4 379.4 L1421.4 380.4 L1421.3 381.3 L1421.2 382.3 L1421.0 383.2 L1420.7 384.1 L1420.4 385.1 L1420.0 385.9 L1419.6 386.8 L1419.1 387.7 L1418.6 388.5 L1418.0 389.3 L1417.3 390.0 L1416.6 390.7 L1415.9 391.4 L1415.1 392.0 L1414.2 392.6 L1413.4 393.1 L1412.5 393.6 L1411.5 394.0 L1410.6 394.3 L1409.6 394.6 L1408.6 394.9 L1407.5 395.0 L1406.5 395.1 L1405.5 395.2 L1404.4 395.1 L1403.3 395.0 L1402.3 394.9 L1401.3 394.7 L1400.2 394.4 L1399.2 394.0 L1398.2 393.6 L1397.3 393.1 L1396.3 392.5 L1395.4 391.9 L1394.5 391.2 L1393.7 390.5 L1392.9 389.7 L1392.2 388.9 L1391.5 388.0 L1390.9 387.1 L1390.3 386.1 L1389.8 385.1 L1389.4 384.1 L1389.0 383.0 L1388.7 381.9 L1388.4 380.8 L1388.2 379.6 L1388.1 378.5 L1388.1 377.3 L1388.1 376.2 L1388.2 375.0 L1388.4 373.9 L1388.7 372.7 L1389.0 371.6 L1389.4 370.5 L1389.9 369.4 L1390.5 368.3 L1391.1 367.3 L1391.8 366.3 L1392.5 365.4 L1393.3 364.4 L1394.2 363.6 L1395.1 362.8 L1396.1 362.0 L1397.1 361.4 L1398.1 360.7 L1399.2 360.2 L1400.4 359.7 L1401.6 359.3 L1402.8 358.9 L1404.0 358.7 L1405.2 358.5 L1406.5 358.4 L1407.8 358.4 L1409.0 358.4 L1410.3 358.5 L1411.6 358.8 L1412.8 359.0 L1414.1 359.4 L1415.3 359.9 L1416.5 360.4 L1417.6 361.0 L1418.7 361.7 L1419.8 362.4 L1420.8 363.2 L1421.8 364.1 L1422.7 365.1 L1423.6 366.1 L1424.4 367.1 L1425.2 368.2 L1425.8 369.4 L1426.4 370.6 L1427.0 371.9 L1427.4 373.1 L1427.8 374.4 L1428.0 375.8 L1428.2 377.1 L1428.3 378.5 L1428.4 379.9 L1428.3 381.3 L1428.2 382.6 L1427.9 384.0 L1427.6 385.4 L1427.2 386.7 L1426.7 388.0 L1426.1 389.3 L1425.5 390.5 L1424.7 391.8 L1423.9 392.9 L1423.0 394.0 L1422.1 395.1 L1421.0 396.1 L1420.0 397.0 L1418.8 397.9 L1417.6 398.7 L1416.3 399.4 L1415.0 400.0 L1413.7 400.6 L1412.3 401.1 L1410.9 401.5 L1409.4 401.8 L1408.0 402.0 L1406.5 402.1 L1405.0 402.1 L1403.5 402.0 L1402.0 401.9 L1400.6 401.6 L1399.1 401.3 L1397.7 400.8 L1396.2 400.3 L1394.9 399.7 L1393.5 398.9 L1392.2 398.1 L1391.0 397.3 L1389.8 396.3 L1388.6 395.3 L1387.6 394.2 L1386.6 393.0 L1385.6 391.7 L1384.8 390.4 L1384.0 389.1 L1383.3 387.7 L1382.7 386.2 L1382.2 384.7 L1381.8 383.2 L1381.5 381.7 L1381.3 380.1 L1381.2 378.5 L1381.2 376.9 L1381.2 375.3 L1381.4 373.7 L1381.7 372.1 L1382.1 370.6 L1382.6 369.0 L1383.1 367.5 L1383.8 366.0 L1384.6 364.6 L1385.4 363.2 L1386.4 361.9 L1387.4 360.6 L1388.5 359.4 L1389.7 358.2 L1391.0 357.2 L1392.3 356.2 L1393.7 355.3 L1395.2 354.5 L1396.7 353.7 L1398.2 353.1 L1399.8 352.6 L1401.5 352.1 L1403.1 351.8 L1404.8 351.6 L1406.5 351.4 L1408.2 351.4 L1409.9 351.5 L1411.6 351.7 L1413.3 352.0 L1415.0 352.4 L1416.6 353.0 L1418.2 353.6 L1419.8 354.3 L1421.3 355.1 L1422.8 356.0 L1424.2 357.1 L1425.6 358.2 L1426.9 359.4 L1428.1 360.6 L1429.2 362.0 L1430.3 363.4 L1431.3 364.9 L1432.1 366.4 L1432.9 368.1 L1433.6 369.7 L1434.1 371.4 L1434.6 373.1 L1434.9 374.9 L1435.2 376.7 L1435.3 378.5"/>
<path d="M1478.3 350.0 L1484.4 366.4 L1501.7 363.5 L1490.5 377.0 L1501.7 390.5 L1484.4 387.6 L1478.3 404.0 L1472.2 387.6 L1454.9 390.5 L1466.1 377.0 L1454.9 363.5 L1472.2 366.4 Z"/>
<path d="M1537.700 352.700 H1575.700 L1559.300 401.200 H1521.300 Z"/>
</svg>
<div class="sl" style="left:1.3px;top:66.0px">箭头</div>
<div class="sl" style="left:71.3px;top:66.0px">箭头1</div>
<div class="sl" style="left:141.3px;top:66.0px">箭头2</div>
<div class="sl" style="left:1.3px;top:144.0px">同心圆</div>
<div class="sl" style="left:71.3px;top:144.0px">十字</div>
<div class="sl" style="left:141.3px;top:144.0px">十字箭头</div>
<div class="sl" style="left:1.3px;top:222.5px">双箭头</div>
<div class="sl" style="left:71.3px;top:222.5px">五角星</div>
<div class="sl" style="left:141.3px;top:222.5px">心形</div>
<div class="sl" style="left:1.3px;top:300.0px">螺旋线</div>
<div class="sl" style="left:71.3px;top:300.0px">六角星</div>
<div class="sl" style="left:141.3px;top:300.0px">平行四边形</div>
</div>
<div class="rt" style="left:1382px;top:454.500px;width:80px">图层参数</div>
<div class="rt" style="left:1497px;top:454.500px;width:80px">控制加工</div>
<div class="abs" style="left:1363px;top:473.500px;width:117px;height:3.5px;background:#0b7dc8"></div>
<div class="abs" style="left:1376px;top:489px;width:217.500px;height:34px;background:#0b7dc8;border-radius:3px 3px 0 0"></div>
<div class="th" style="left:1372.3px;top:500px">加工工艺</div>
<div class="th" style="left:1426.7px;top:500px">速度</div>
<div class="th" style="left:1481.0px;top:500px">功率</div>
<div class="th" style="left:1535.7px;top:500px">输出</div>
<div class="abs" style="left:1426px;top:676px;width:107px;height:107px;border-radius:50%;border:3.5px solid #0b7dc8;background:#fff"></div>
<div class="abs" style="left:1434px;top:684px;width:91px;height:91px;border-radius:50%;background:#0b7dc8;color:#fff;font-size:24px;line-height:92px;text-align:center;font-weight:500">发送</div>
<div class="abs" style="left:1377px;top:798px;font-size:12.5px;line-height:15px;font-weight:700;color:#222">输出选中图元</div>
<div class="abs" style="left:1553px;top:795.500px;width:31px;height:16.500px;border-radius:9px;background:#dcdcdc"></div>
<div class="abs" style="left:1554.500px;top:797px;width:13.500px;height:13.500px;border-radius:50%;background:#fff"></div>
<div class="abs" style="left:1376px;top:818.500px;width:161px;height:12px;background:#fff;border:1px solid #b9b9b9"></div>
<div class="abs" style="left:1536.500px;top:818.500px;width:57px;height:12px;background:#d6d6d6"></div>
<div class="abs" style="left:1431px;top:823.5px;width:10px;height:10px;border-radius:50%;border:1.5px solid #f08a24"></div>
<div class="abs" style="left:1448px;top:825.5px;font-size:12px;line-height:12px;color:#f08a24;letter-spacing:1px">未连接</div>
<div class="abs" style="left:1551px;top:825px;font-size:12.5px;line-height:12px;color:#333;font-weight:700;letter-spacing:1px">连接</div>
<!--RI-END-->

<!-- ================= DIALOG ================= -->
<!--DL-START-->
<div id="dlg">
<div class="abs" style="left:0;top:.6px;width:788px;height:443.400px">
  <div id="dlgtitle"></div>
  <!-- app icon -->
  <svg class="abs" style="left:7px;top:5.500px" width="13" height="13" viewBox="0 0 13 13"><defs><linearGradient id="lmg0" x1="0" y1="0" x2=".4" y2="1"><stop offset="0" stop-color="#3ec6e2"/><stop offset="1" stop-color="#1f80cc"/></linearGradient></defs><rect width="13" height="13" rx="1.600" fill="url(#lmg0)"/><path d="M4.200 1.800 H6.300 L4.800 7.300 H10 L9.600 9 H2.200 Z" fill="#fff"/><rect x="7" y="1.800" width="4.600" height="4.600" fill="#ffcd38"/><path d="M2 11 H11" stroke="#cfeaf8" stroke-width="1" stroke-dasharray="1.200 .500"/></svg>
  <div class="abs" style="left:25px;top:5.600px;font-size:10px;line-height:14px;color:#111">打开文件</div>
  <svg class="abs" style="left:769.500px;top:7.500px" width="9" height="9" viewBox="0 0 9 9"><path d="M.5 .5 L8.500 8.500 M8.500 .5 L.5 8.500" stroke="#222" stroke-width="1"/></svg>
  <!-- nav row -->
  <svg class="abs" style="left:12px;top:42px" width="100" height="12" viewBox="0 0 100 12" fill="none" stroke-linecap="round" stroke-linejoin="round">
    <path d="M11 6 H1.500 M5.500 2 L1.500 6 L5.500 10" stroke="#9a9a9a" stroke-width="1"/>
    <path d="M30 6 H39.500 M35.500 2 L39.500 6 L35.500 10" stroke="#9a9a9a" stroke-width="1"/>
    <path d="M57 4.500 L60.300 7.800 L63.600 4.500" stroke="#9a9a9a" stroke-width="1"/>
    <path d="M84.600 11 V1.500 M80.500 5.500 L84.600 1.500 L88.700 5.500" stroke="#555" stroke-width="1"/>
  </svg>
  <div class="abs" style="left:114px;top:33.500px;width:485px;height:29px;background:#fff;border:1px solid #e3e3e3"></div>
  <svg class="abs" style="left:121.500px;top:41px" width="14.500" height="11.500" viewBox="0 0 14.500 11.500"><path d="M0 1.500 A1 1 0 0 1 1 .5 H4.800 L6.300 2 H13.500 A1 1 0 0 1 14.500 3 V10.500 A1 1 0 0 1 13.500 11.500 H1 A1 1 0 0 1 0 10.500 Z" fill="#f5b83a"/><path d="M0 3.500 A1 1 0 0 1 1 2.600 H13.500 A1 1 0 0 1 14.500 3.500 V10.500 A1 1 0 0 1 13.500 11.500 H1 A1 1 0 0 1 0 10.500 Z" fill="#ffd76a"/></svg>
  <svg class="abs" style="left:141px;top:44.500px" width="5" height="7" viewBox="0 0 5 7"><path d="M1 .8 L4 3.500 L1 6.200" fill="none" stroke="#555" stroke-width=".900"/></svg>
  <div class="abs" style="left:154px;top:40.500px;font-size:10px;line-height:14px;color:#111">桌面</div>
  <svg class="abs" style="left:182px;top:44.500px" width="5" height="7" viewBox="0 0 5 7"><path d="M1 .8 L4 3.500 L1 6.200" fill="none" stroke="#555" stroke-width=".900"/></svg>
  <div class="abs" style="left:195px;top:40.500px;font-size:10px;line-height:14px;color:#111">小马宝莉</div>
  <svg class="abs" style="left:549.500px;top:45.500px" width="9" height="6" viewBox="0 0 9 6"><path d="M1 1 L4.500 4.500 L8 1" fill="none" stroke="#777" stroke-width="1"/></svg>
  <svg class="abs" style="left:577px;top:42.500px" width="11" height="11" viewBox="0 0 11 11"><path d="M9.800 5.500 A4.400 4.400 0 1 1 8.300 2.200" fill="none" stroke="#777" stroke-width="1"/><path d="M6.300 2.600 H9 V0" fill="none" stroke="#777" stroke-width="1"/></svg>
  <div class="abs" style="left:609px;top:33.500px;width:168px;height:29px;background:#fff;border:1px solid #e3e3e3"></div>
  <div class="abs" style="left:617px;top:41px;font-size:10px;line-height:14px;color:#767676">在 小马宝莉 中搜索</div>
  <svg class="abs" style="left:755px;top:43px" width="10" height="10" viewBox="0 0 10 10"><circle cx="6" cy="4" r="3" fill="none" stroke="#555" stroke-width="1.100"/><path d="M3.800 6.200 L.8 9.200" stroke="#555" stroke-width="1.200"/></svg>
  <!-- command row -->
  <div class="abs" style="left:0;top:71.500px;width:788px;height:26.500px;background:#f3f5f8;border-bottom:1px solid #e4e6e9"></div>
  <div class="abs" style="left:15px;top:78.300px;font-size:10px;line-height:14px;color:#1f3d6d">组织</div>
  <div class="abs" style="left:40px;top:83px;width:0;height:0;border-left:3.300px solid transparent;border-right:3.300px solid transparent;border-top:4px solid #1f3d6d"></div>
  <div class="abs" style="left:71.500px;top:78.300px;font-size:10px;line-height:14px;color:#1f3d6d">新建文件夹</div>
  <svg class="abs" style="left:686px;top:79px" width="30" height="11" viewBox="0 0 30 11"><rect x="1" y=".8" width="8.500" height="7" fill="#fff" stroke="#111" stroke-width="1"/><path d="M.5 10 H10" stroke="#111" stroke-width="1"/><path d="M20.500 3.500 H27 L23.750 7 Z" fill="#1f3d6d"/></svg>
  <svg class="abs" style="left:732.500px;top:79px" width="12" height="10" viewBox="0 0 12 10"><rect x=".5" y=".5" width="11" height="9" fill="#fff" stroke="#111" stroke-width="1"/><rect x="6.500" y="1" width="4.800" height="8" fill="#1b78d0"/></svg>
  <svg class="abs" style="left:760.500px;top:77px" width="14" height="14" viewBox="0 0 14 14"><circle cx="7" cy="7" r="6.800" fill="#0f7fdb"/><text x="7" y="10.300" font-family="Liberation Sans, sans-serif" font-size="9" font-weight="700" fill="#fff" text-anchor="middle">?</text></svg>
  <!-- nav pane -->
  <div class="abs" style="left:1px;top:98.500px;width:116.300px;height:273px;background:#fff"></div>
  <div class="abs" style="left:117.300px;top:98.500px;width:15px;height:273px;background:#f0f0f0"></div>
  <div class="abs" style="left:122.500px;top:135px;width:2px;height:100px;background:#8a8a8a;border-radius:1px"></div>
  <div class="abs" style="left:132px;top:98.500px;width:656px;height:273px;background:#fff"></div>
  <div class="abs" style="left:2px;top:98.500px;width:114px;height:27px;background:#d9d9d9;border:1px solid #9d9d9d;border-right:none"></div>
  <svg class="abs" style="left:11.500px;top:108px" width="5" height="8" viewBox="0 0 5 8"><path d="M1 1 L4 4 L1 7" fill="none" stroke="#666" stroke-width="1"/></svg>
  <svg class="abs" style="left:28px;top:107px" width="14" height="9" viewBox="0 0 14 9"><path d="M3.300 9 A3.200 3.200 0 0 1 2.900 2.700 A4.200 4.200 0 0 1 10.600 2.300 A3.400 3.400 0 0 1 10.800 9 Z" fill="#1b7fe0"/><path d="M2.900 2.700 A4.200 4.200 0 0 1 8 .6 L3.300 9 A3.200 3.200 0 0 1 2.900 2.700Z" fill="#0f5fc0"/><path d="M6 9 L10 2 A3.400 3.400 0 0 1 10.800 9 Z" fill="#4aa5f5"/></svg>
  <div class="abs" style="left:46px;top:104.500px;width:70px;overflow:hidden;white-space:nowrap;font-size:10.500px;line-height:14px;color:#111;letter-spacing:.2px">OneDrive - Personal</div>
  <div class="abs" style="left:9px;top:138px;width:100px;height:1px;background:#d8d8d8"></div>
  <div class="abs" style="left:46.3px;top:158.0px;font-size:10px;line-height:14px;color:#111;white-space:nowrap">桌面</div>
<svg class="abs" style="left:105.0px;top:160.1px" width="9" height="9" viewBox="0 0 9 9"><path d="M5.200 .5 L8.500 3.800 L7.600 4.200 L6.800 4 L5.300 5.500 L5.200 7.200 L4.400 7.600 L1.400 4.600 L1.800 3.800 L3.500 3.700 L5 2.200 L4.800 1.400 Z" fill="#8b959f"/><path d="M2.900 6.100 L.5 8.500" stroke="#8b959f" stroke-width="1"/></svg>
<div class="abs" style="left:46.3px;top:184.6px;font-size:10px;line-height:14px;color:#111;white-space:nowrap">下载</div>
<svg class="abs" style="left:105.0px;top:186.7px" width="9" height="9" viewBox="0 0 9 9"><path d="M5.200 .5 L8.500 3.800 L7.600 4.200 L6.800 4 L5.300 5.500 L5.200 7.200 L4.400 7.600 L1.400 4.600 L1.800 3.800 L3.500 3.700 L5 2.200 L4.800 1.400 Z" fill="#8b959f"/><path d="M2.900 6.100 L.5 8.500" stroke="#8b959f" stroke-width="1"/></svg>
<div class="abs" style="left:46.3px;top:211.3px;font-size:10px;line-height:14px;color:#111;white-space:nowrap">文档</div>
<svg class="abs" style="left:105.0px;top:213.4px" width="9" height="9" viewBox="0 0 9 9"><path d="M5.200 .5 L8.500 3.800 L7.600 4.200 L6.800 4 L5.300 5.500 L5.200 7.200 L4.400 7.600 L1.400 4.600 L1.800 3.800 L3.500 3.700 L5 2.200 L4.800 1.400 Z" fill="#8b959f"/><path d="M2.900 6.100 L.5 8.500" stroke="#8b959f" stroke-width="1"/></svg>
<div class="abs" style="left:46.3px;top:238.0px;font-size:10px;line-height:14px;color:#111;white-space:nowrap">图片</div>
<svg class="abs" style="left:105.0px;top:240.1px" width="9" height="9" viewBox="0 0 9 9"><path d="M5.200 .5 L8.500 3.800 L7.600 4.200 L6.800 4 L5.300 5.500 L5.200 7.200 L4.400 7.600 L1.400 4.600 L1.800 3.800 L3.500 3.700 L5 2.200 L4.800 1.400 Z" fill="#8b959f"/><path d="M2.900 6.100 L.5 8.500" stroke="#8b959f" stroke-width="1"/></svg>
<div class="abs" style="left:46.3px;top:264.6px;font-size:10px;line-height:14px;color:#111;white-space:nowrap">音乐</div>
<svg class="abs" style="left:105.0px;top:266.7px" width="9" height="9" viewBox="0 0 9 9"><path d="M5.200 .5 L8.500 3.800 L7.600 4.200 L6.800 4 L5.300 5.500 L5.200 7.200 L4.400 7.600 L1.400 4.600 L1.800 3.800 L3.500 3.700 L5 2.200 L4.800 1.400 Z" fill="#8b959f"/><path d="M2.900 6.100 L.5 8.500" stroke="#8b959f" stroke-width="1"/></svg>
<div class="abs" style="left:46.3px;top:291.3px;font-size:10px;line-height:14px;color:#111;white-space:nowrap">视频</div>
<svg class="abs" style="left:105.0px;top:293.4px" width="9" height="9" viewBox="0 0 9 9"><path d="M5.200 .5 L8.500 3.800 L7.600 4.200 L6.800 4 L5.300 5.500 L5.200 7.200 L4.400 7.600 L1.400 4.600 L1.800 3.800 L3.500 3.700 L5 2.200 L4.800 1.400 Z" fill="#8b959f"/><path d="M2.900 6.100 L.5 8.500" stroke="#8b959f" stroke-width="1"/></svg>
<div class="abs" style="left:46.3px;top:318.0px;font-size:10px;line-height:14px;color:#111;white-space:nowrap;font-size:10.5px;letter-spacing:.25px">drive (\\192</div>
<svg class="abs" style="left:105.0px;top:320.1px" width="9" height="9" viewBox="0 0 9 9"><path d="M5.200 .5 L8.500 3.800 L7.600 4.200 L6.800 4 L5.300 5.500 L5.200 7.200 L4.400 7.600 L1.400 4.600 L1.800 3.800 L3.500 3.700 L5 2.200 L4.800 1.400 Z" fill="#8b959f"/><path d="M2.900 6.100 L.5 8.500" stroke="#8b959f" stroke-width="1"/></svg>
<div class="abs" style="left:46.3px;top:344.6px;font-size:10px;line-height:14px;color:#111;white-space:nowrap">素材</div>
<svg class="abs" style="left:28.6px;top:159.8px" width="13.5" height="10.4" viewBox="0 0 13.5 10.4"><defs><linearGradient id="dk" x1="0" y1="0" x2="1" y2="1"><stop offset="0" stop-color="#2fc0ee"/><stop offset="1" stop-color="#0f7fd2"/></linearGradient></defs><rect width="13.500" height="10" rx="1.200" fill="url(#dk)"/><rect x="1.500" y="1.600" width="1.400" height="1.400" fill="#fff"/><rect x="1.500" y="4.200" width="1.400" height="1.400" fill="#fff"/><path d="M0 10.200 H13.500" stroke="#0d6fbd" stroke-width=".600"/></svg>
<svg class="abs" style="left:30.0px;top:185.2px" width="11.0" height="13.2" viewBox="0 0 11.0 13.2"><path d="M5.500 .5 V9 M1.500 5.200 L5.500 9.200 L9.500 5.200" fill="none" stroke="#1fb98c" stroke-width="1.300"/><path d="M.5 12.300 H10.500" stroke="#1fb98c" stroke-width="1.400"/></svg>
<svg class="abs" style="left:30.3px;top:211.7px" width="10.2" height="13.5" viewBox="0 0 10.2 13.5"><defs><linearGradient id="dc" x1="0" y1="0" x2="0" y2="1"><stop offset="0" stop-color="#b4c2dc"/><stop offset="1" stop-color="#8a9fc4"/></linearGradient></defs><rect width="10.200" height="13.500" rx="1.200" fill="url(#dc)"/><rect x="2" y="3" width="2.600" height="2.600" fill="#fff"/><path d="M5.500 3.500 H8.300 M5.500 5.200 H8.300 M2 7.500 H8.300 M2 9.500 H8.300" stroke="#fff" stroke-width="1"/></svg>
<svg class="abs" style="left:29.3px;top:239.4px" width="11.8" height="11.6" viewBox="0 0 11.8 11.6"><rect width="11.800" height="11.600" rx="1.200" fill="#2189e3"/><circle cx="8.800" cy="2.800" r="1" fill="#fff"/><path d="M1.200 11 L5.300 6 L10.800 11 Z" fill="#fff"/></svg>
<svg class="abs" style="left:28.7px;top:265.0px" width="13.2" height="13.2" viewBox="0 0 13.2 13.2"><defs><linearGradient id="mu" x1="0" y1="0" x2="1" y2="1"><stop offset="0" stop-color="#f59245"/><stop offset="1" stop-color="#c45cae"/></linearGradient></defs><circle cx="6.600" cy="6.600" r="6.600" fill="url(#mu)"/><path d="M6.800 9 V3.300 L8.800 4.200" fill="none" stroke="#fff" stroke-width="1.100"/><circle cx="5.800" cy="9.200" r="1.300" fill="#fff"/></svg>
<svg class="abs" style="left:29.4px;top:291.8px" width="11.8" height="13.4" viewBox="0 0 11.8 13.4"><rect width="11.800" height="13.400" rx="1.200" fill="#8b4de2"/><path d="M4.200 4.300 L8.300 6.700 L4.200 9.100 Z" fill="#fff"/><path d="M1.500 1.300 V12.200 M10.300 1.300 V12.200" stroke="#4a2aa0" stroke-width="1.200" stroke-dasharray="1.300 1.500"/></svg>
<svg class="abs" style="left:29.3px;top:322.2px" width="12.0" height="9.6" viewBox="0 0 12.0 9.6"><rect x=".3" y="0" width="11.400" height="3.600" rx="1" fill="#c9c9c9"/><rect x="0" y="3" width="12" height="3" fill="#3a3a3a"/><rect x="0" y="6" width="12" height="3.400" rx=".800" fill="#34c759"/></svg>
<svg class="abs" style="left:28.7px;top:345.2px" width="13.6" height="11.4" viewBox="0 0 13.6 11.4"><path d="M0 1.500 A1 1 0 0 1 1 .5 H4.500 L6 2 H12.600 A1 1 0 0 1 13.600 3 V10.400 A1 1 0 0 1 12.600 11.400 H1 A1 1 0 0 1 0 10.400 Z" fill="#f5b83a"/><path d="M0 3.400 A1 1 0 0 1 1 2.500 H12.600 A1 1 0 0 1 13.600 3.400 V10.400 A1 1 0 0 1 12.600 11.400 H1 A1 1 0 0 1 0 10.400 Z" fill="#ffd86c"/></svg>
  <!-- files -->
  <div class="abs" style="left:145px;top:103.500px;width:88px;height:98.500px;background:#cce6fb;border:1px solid #1a2836"></div>
  <div class="abs" style="left:150.500px;top:106.500px;width:75px;height:75px;background:#fff;box-shadow:1px 1.500px 1.500px rgba(80,120,160,.55)"></div>
  <svg class="abs" style="left:150.5px;top:106.5px" width="75" height="75" viewBox="0 0 75 75">
<path d="M33.3 42.6 C31.7 41.7 27.6 43.7 25.5 45.2 C23.4 46.8 21.7 49.5 20.7 51.8 C19.6 54.0 19.7 56.6 19.1 58.6 C18.4 60.5 16.6 61.9 16.7 63.5 C16.8 65.2 17.9 67.6 19.6 68.4 C21.4 69.1 25.3 68.7 27.2 68.0 C29.0 67.3 29.5 65.4 30.7 64.1 C32.0 62.7 33.8 62.1 34.6 59.9 C35.4 57.6 35.8 53.6 35.6 50.7 C35.3 47.8 35.0 43.5 33.3 42.6 Z" fill="#ee4b92" stroke="#7d1f52" stroke-width="0.6" stroke-linejoin="round"/>
<path d="M34.6 43.1 C33.1 44.5 33.7 47.9 33.7 50.7 C33.7 53.5 34.3 57.1 34.6 59.9 C35.0 62.6 35.1 65.5 35.9 67.1 C36.8 68.6 38.5 69.1 39.9 69.3 C41.2 69.5 43.2 69.5 44.2 68.4 C45.1 67.2 45.0 62.5 45.5 62.5 C46.0 62.5 46.1 67.2 47.1 68.4 C48.0 69.5 49.7 69.4 51.0 69.3 C52.3 69.2 53.5 68.0 54.9 67.7 C56.3 67.4 58.5 68.1 59.5 67.5 C60.5 66.8 61.5 65.0 60.9 63.5 C60.4 62.0 57.6 60.6 56.2 58.6 C54.8 56.5 53.7 53.7 52.3 51.4 C50.9 49.1 49.2 46.3 47.7 44.8 C46.2 43.4 45.3 42.9 43.1 42.6 C41.0 42.3 36.2 41.8 34.6 43.1 Z" fill="#f9b6d2" stroke="#5a2a3c" stroke-width="0.6" stroke-linejoin="round"/>
<path d="M26.1 64.1 C26.5 63.4 27.6 62.6 28.8 62.5 C30.0 62.4 32.4 62.8 33.3 63.5 C34.3 64.2 35.2 66.0 34.6 66.7 C34.1 67.3 31.4 67.5 30.1 67.5 C28.8 67.5 27.5 67.2 26.8 66.7 C26.1 66.1 25.8 64.7 26.1 64.1 Z" fill="#f59fc3" stroke="#5a2a3c" stroke-width="0.5" stroke-linejoin="round"/>
<path d="M43.8 50.7 L45.5 63.1" stroke="#5a2a3c" stroke-width=".5" fill="none"/>
<path d="M48.4 49.4 Q51.0 59.9 54.9 67.5" stroke="#5a2a3c" stroke-width=".5" fill="none"/>
<path d="M13.1 33.5 C12.6 32.0 13.0 29.2 13.3 27.2 C13.7 25.2 14.1 22.9 15.0 21.3 C16.0 19.7 17.5 18.5 19.0 17.4 C20.4 16.2 22.5 15.8 23.8 14.4 C25.1 13.0 25.3 10.5 26.8 8.9 C28.3 7.3 30.5 5.4 32.7 5.0 C34.9 4.5 37.9 5.2 39.9 6.0 C41.8 6.8 42.6 9.4 44.4 9.9 C46.3 10.5 49.0 8.4 51.0 9.3 C53.0 10.2 55.2 13.1 56.5 15.4 C57.7 17.8 58.4 20.9 58.4 23.3 C58.5 25.7 56.8 27.6 56.9 29.8 C56.9 32.0 58.9 33.9 58.8 36.3 C58.8 38.7 57.5 42.0 56.5 44.2 C55.4 46.4 54.0 48.7 52.5 49.4 C51.1 50.1 49.0 49.3 47.7 48.4 C46.5 47.4 46.1 46.4 45.1 43.5 C44.1 40.7 43.9 34.7 41.8 31.1 C39.8 27.5 35.2 22.8 32.7 22.0 C30.2 21.1 28.3 24.2 26.8 26.1 C25.3 28.1 24.9 32.0 23.8 33.7 C22.6 35.5 21.1 36.2 19.9 36.6 C18.6 37.0 17.5 36.6 16.3 36.1 C15.2 35.6 13.6 34.9 13.1 33.5 Z" fill="#ee4b92" stroke="#7d1f52" stroke-width="0.6" stroke-linejoin="round"/>
<path d="M28.8 26.1 C29.8 24.7 31.6 23.3 33.3 22.6 C35.1 22.0 37.4 21.8 39.2 22.2 C41.1 22.7 43.2 23.7 44.4 25.2 C45.6 26.7 46.3 29.0 46.4 31.1 C46.5 33.2 46.0 35.8 45.1 37.6 C44.2 39.5 42.8 41.2 41.2 42.2 C39.5 43.2 37.1 43.5 35.3 43.5 C33.4 43.5 31.3 43.0 30.1 42.2 C28.8 41.5 28.0 40.0 27.7 39.0 C27.4 37.9 28.4 37.0 28.2 35.7 C28.1 34.4 26.7 32.7 26.8 31.1 C26.9 29.5 27.7 27.6 28.8 26.1 Z" fill="#f9b6d2" stroke="#5a2a3c" stroke-width="0.6" stroke-linejoin="round"/>
<path d="M36.9 23.0 C36.5 21.8 37.6 18.7 38.2 17.4 C38.7 16.0 39.3 14.8 40.0 14.9 C40.7 15.0 41.5 16.5 42.1 18.0 C42.7 19.5 43.9 22.8 43.7 23.9 C43.4 25.0 41.7 24.7 40.5 24.6 C39.4 24.4 37.3 24.2 36.9 23.0 Z" fill="#f9b6d2" stroke="#5a2a3c" stroke-width="0.6" stroke-linejoin="round"/>
<path d="M13.1 33.5 C12.6 32.0 13.0 29.2 13.3 27.2 C13.7 25.2 14.1 22.9 15.0 21.3 C16.0 19.7 17.5 18.5 19.0 17.4 C20.4 16.2 22.2 15.4 23.8 14.4 C25.4 13.4 26.9 11.5 28.8 11.5 C30.6 11.5 33.2 12.7 34.6 14.1 C36.1 15.5 37.3 18.4 37.3 20.0 C37.3 21.6 35.8 23.2 34.6 23.9 C33.4 24.7 31.4 23.9 30.1 24.6 C28.8 25.2 27.8 26.3 26.8 27.8 C25.8 29.4 25.3 32.3 24.2 33.7 C23.0 35.2 21.2 36.2 19.9 36.6 C18.6 37.0 17.5 36.6 16.3 36.1 C15.2 35.6 13.6 34.9 13.1 33.5 Z" fill="#ee4b92" stroke="#7d1f52" stroke-width="0.6" stroke-linejoin="round"/>
<ellipse cx="40.3" cy="32.7" rx="3.4" ry="5.3" fill="#fff" stroke="#222" stroke-width=".5" transform="rotate(-8 40.3 32.7)"/>
<ellipse cx="40.0" cy="32.9" rx="2.7" ry="4.4" fill="#27a8c6" transform="rotate(-8 40.3 32.7)"/>
<ellipse cx="40.8" cy="33.5" rx="1.7" ry="3" fill="#111"/>
<circle cx="40.1" cy="30.7" r=".9" fill="#fff"/>
<ellipse cx="28.5" cy="34.5" rx="2.2" ry="3.8" fill="#111" transform="rotate(-25 28.5 34.5)"/>
<ellipse cx="27.9" cy="33.9" rx="1" ry="2" fill="#27a8c6" transform="rotate(-25 28.5 34.5)"/>
<circle cx="27.6" cy="32.7" r=".6" fill="#fff"/>
<path d="M59.1 18.9 l2.2 -1.800 l.4 1.300 l2.100 -2.400" fill="none" stroke="#f8f2b8" stroke-width="1.300"/>
</svg>
  <div class="abs fl" style="left:149px;top:186px;width:80px">小马宝莉碧琪</div>
  <svg class="abs" style="left:240.0px;top:104.9px" width="80.500" height="80.500" viewBox="0 0 80.500 80.500"><defs><linearGradient id="lmg" x1=".2" y1="0" x2=".6" y2="1"><stop offset="0" stop-color="#3cc9e4"/><stop offset=".55" stop-color="#2d9fd8"/><stop offset="1" stop-color="#1f7dca"/></linearGradient></defs><rect width="80.500" height="80.500" rx="9" fill="url(#lmg)"/><path d="M23.900 11.100 H37 L27.200 46.400 H63.100 L60.500 56.200 H11.500 Z" fill="#fff"/><rect x="42.900" y="11.100" width="29" height="29.200" fill="#ffcd36"/><path d="M47.800 33.700 V16.300 H52.500 L57.700 22.500 L62.900 16.300 H67.700 V33.700 H62.900 V23 L57.700 29 L55 26 L52.500 29 V33.700 Z" fill="#2c9bd7"/><text x="6.600" y="72.600" font-family="Liberation Sans, sans-serif" font-size="10.800" font-style="italic" font-weight="700" letter-spacing=".9" fill="#fff">Laser<tspan fill="#ffcd36">Maker</tspan></text></svg>
  <div class="abs fl" style="left:240.500px;top:186px;width:80px">小马宝莉碧琪</div>
  <!-- footer -->
  <div class="abs" style="left:0;top:371.500px;width:788px;height:73px;background:#f0f0f0"></div>
  <div class="abs" style="left:108px;top:384.500px;font-size:10px;line-height:14px;color:#111">文件名(<span style="text-decoration:underline">N</span>):</div>
  <div class="abs" style="left:160.500px;top:381px;width:445px;height:21px;background:#fff;border:1px solid #7a7a7a"></div>
  <div class="abs" style="left:164px;top:384.500px;font-size:10px;line-height:14px;color:#111">小马宝莉碧琪</div>
  <svg class="abs" style="left:594px;top:389.500px" width="8" height="5" viewBox="0 0 8 5"><path d="M.7 .7 L4 4 L7.300 .7" fill="none" stroke="#444" stroke-width="1"/></svg>
  <div class="abs" style="left:616px;top:381px;width:157px;height:20px;background:#fbfbfb;border:1px solid #d2d2d2;border-radius:2px"></div>
  <div class="abs" style="left:619.500px;top:384px;font-size:10.300px;line-height:14px;color:#111;white-space:nowrap;letter-spacing:0">All Files (*.lcpx *.lcp *.AI *.DX</div>
  <svg class="abs" style="left:761px;top:389.500px" width="8" height="5" viewBox="0 0 8 5"><path d="M.7 .7 L4 4 L7.300 .7" fill="none" stroke="#444" stroke-width="1"/></svg>
  <div class="abs" style="left:617px;top:407.500px;width:72px;height:20px;background:#fdfdfd;border:1.500px solid #1673cc;border-radius:3.500px;font-size:10px;line-height:17px;text-align:center;color:#111">打开(O)</div>
  <div class="abs" style="left:700px;top:407.500px;width:72px;height:20px;background:#fdfdfd;border:1px solid #d0d0d0;border-radius:3.500px;font-size:10px;line-height:18px;text-align:center;color:#111">取消</div>
  <svg class="abs" style="left:778px;top:433.500px" width="7" height="7" viewBox="0 0 7 7" fill="#b5b5b5"><rect x="5" y="0" width="1.300" height="1.300"/><rect x="2.500" y="2.500" width="1.300" height="1.300"/><rect x="5" y="2.500" width="1.300" height="1.300"/><rect x="0" y="5" width="1.300" height="1.300"/><rect x="2.500" y="5" width="1.300" height="1.300"/><rect x="5" y="5" width="1.300" height="1.300"/></svg>
</div>
  <div class="abs" style="left:0;top:0;width:788px;height:444px;border-radius:8px;box-shadow:inset 1px 0 0 rgba(0,0,0,.14),inset -1px 0 0 rgba(0,0,0,.30),inset 0 1px 0 rgba(0,0,0,.28),inset 0 -1px 0 rgba(0,0,0,.30)"></div>
</div>
<!--DL-END-->

</body>
</html>
